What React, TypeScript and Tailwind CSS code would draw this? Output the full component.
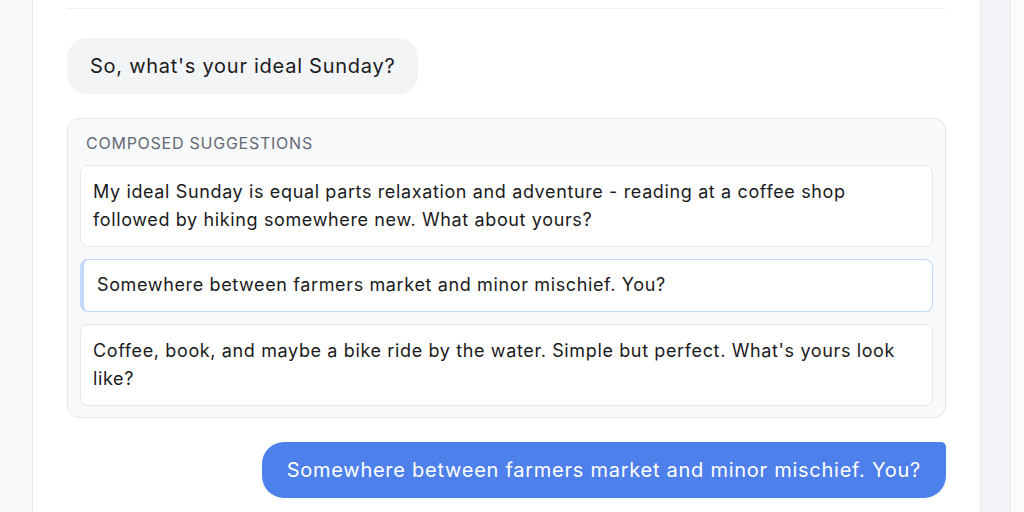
const suggestions = [
  {
    text: "My ideal Sunday is equal parts relaxation and adventure - reading at a coffee shop followed by hiking somewhere new. What about yours?",
    selected: false,
  },
  {
    text: "Somewhere between farmers market and minor mischief. You?",
    selected: true,
  },
  {
    text: "Coffee, book, and maybe a bike ride by the water. Simple but perfect. What's yours look like?",
    selected: false,
  },
];

export default function App() {
  return (
    <div
      className="flex h-[512px] w-full overflow-hidden bg-[#f7f8fa] text-[#1a1a1c]"
      style={{ fontFamily: "Inter, 'Noto Sans', sans-serif" }}
    >
      {/* Left gutter */}
      <div className="w-8 shrink-0" />

      {/* Chat panel */}
      <main className="w-[949px] shrink-0 border-x border-[#e6e8ec] bg-white px-[34px] pt-2">
        <div className="h-px w-full bg-[#eef0f3]" />

        <div className="mt-[29px] flex flex-col gap-6">
          {/* Received message */}
          <div className="flex">
            <div className="rounded-[20px] bg-[#f3f4f6] px-[23px] py-[14px] text-xl leading-7 tracking-[0.037em]">
              So, what's your ideal Sunday?
            </div>
          </div>

          {/* Suggestions */}
          <section className="rounded-xl border border-[#e3e6ea] bg-[#f8f9fb] px-3 pt-3 pb-[11px]">
            <div className="mb-[10px] px-[6px] text-base leading-6 tracking-[0.047em] text-[#636a76]">
              COMPOSED SUGGESTIONS
            </div>
            <div className="flex flex-col gap-3">
              {suggestions.map((s) => (
                <div
                  key={s.text}
                  className={
                    s.selected
                      ? "rounded-lg border border-l-4 border-[#c3d8fb] bg-white pt-[11px] pb-3 pl-[13px] pr-3 text-lg leading-7 tracking-[0.035em]"
                      : "rounded-lg border border-[#e5e7eb] bg-white px-3 py-3 text-lg leading-7 tracking-[0.035em]"
                  }
                >
                  {s.text}
                </div>
              ))}
            </div>
          </section>

          {/* Sent message */}
          <div className="flex justify-end">
            <div className="rounded-[22px] rounded-tr-[5px] bg-[#4e80ec] px-[25px] py-[14px] text-xl leading-7 tracking-[0.037em] text-white">
              Somewhere between farmers market and minor mischief. You?
            </div>
          </div>
        </div>
      </main>

      {/* Right strip */}
      <div className="w-[30px] shrink-0 border-r border-[#e8eaee] bg-[#f3f4f7]" />
      <div className="flex-1 bg-[#fafbfc]" />
    </div>
  );
}
